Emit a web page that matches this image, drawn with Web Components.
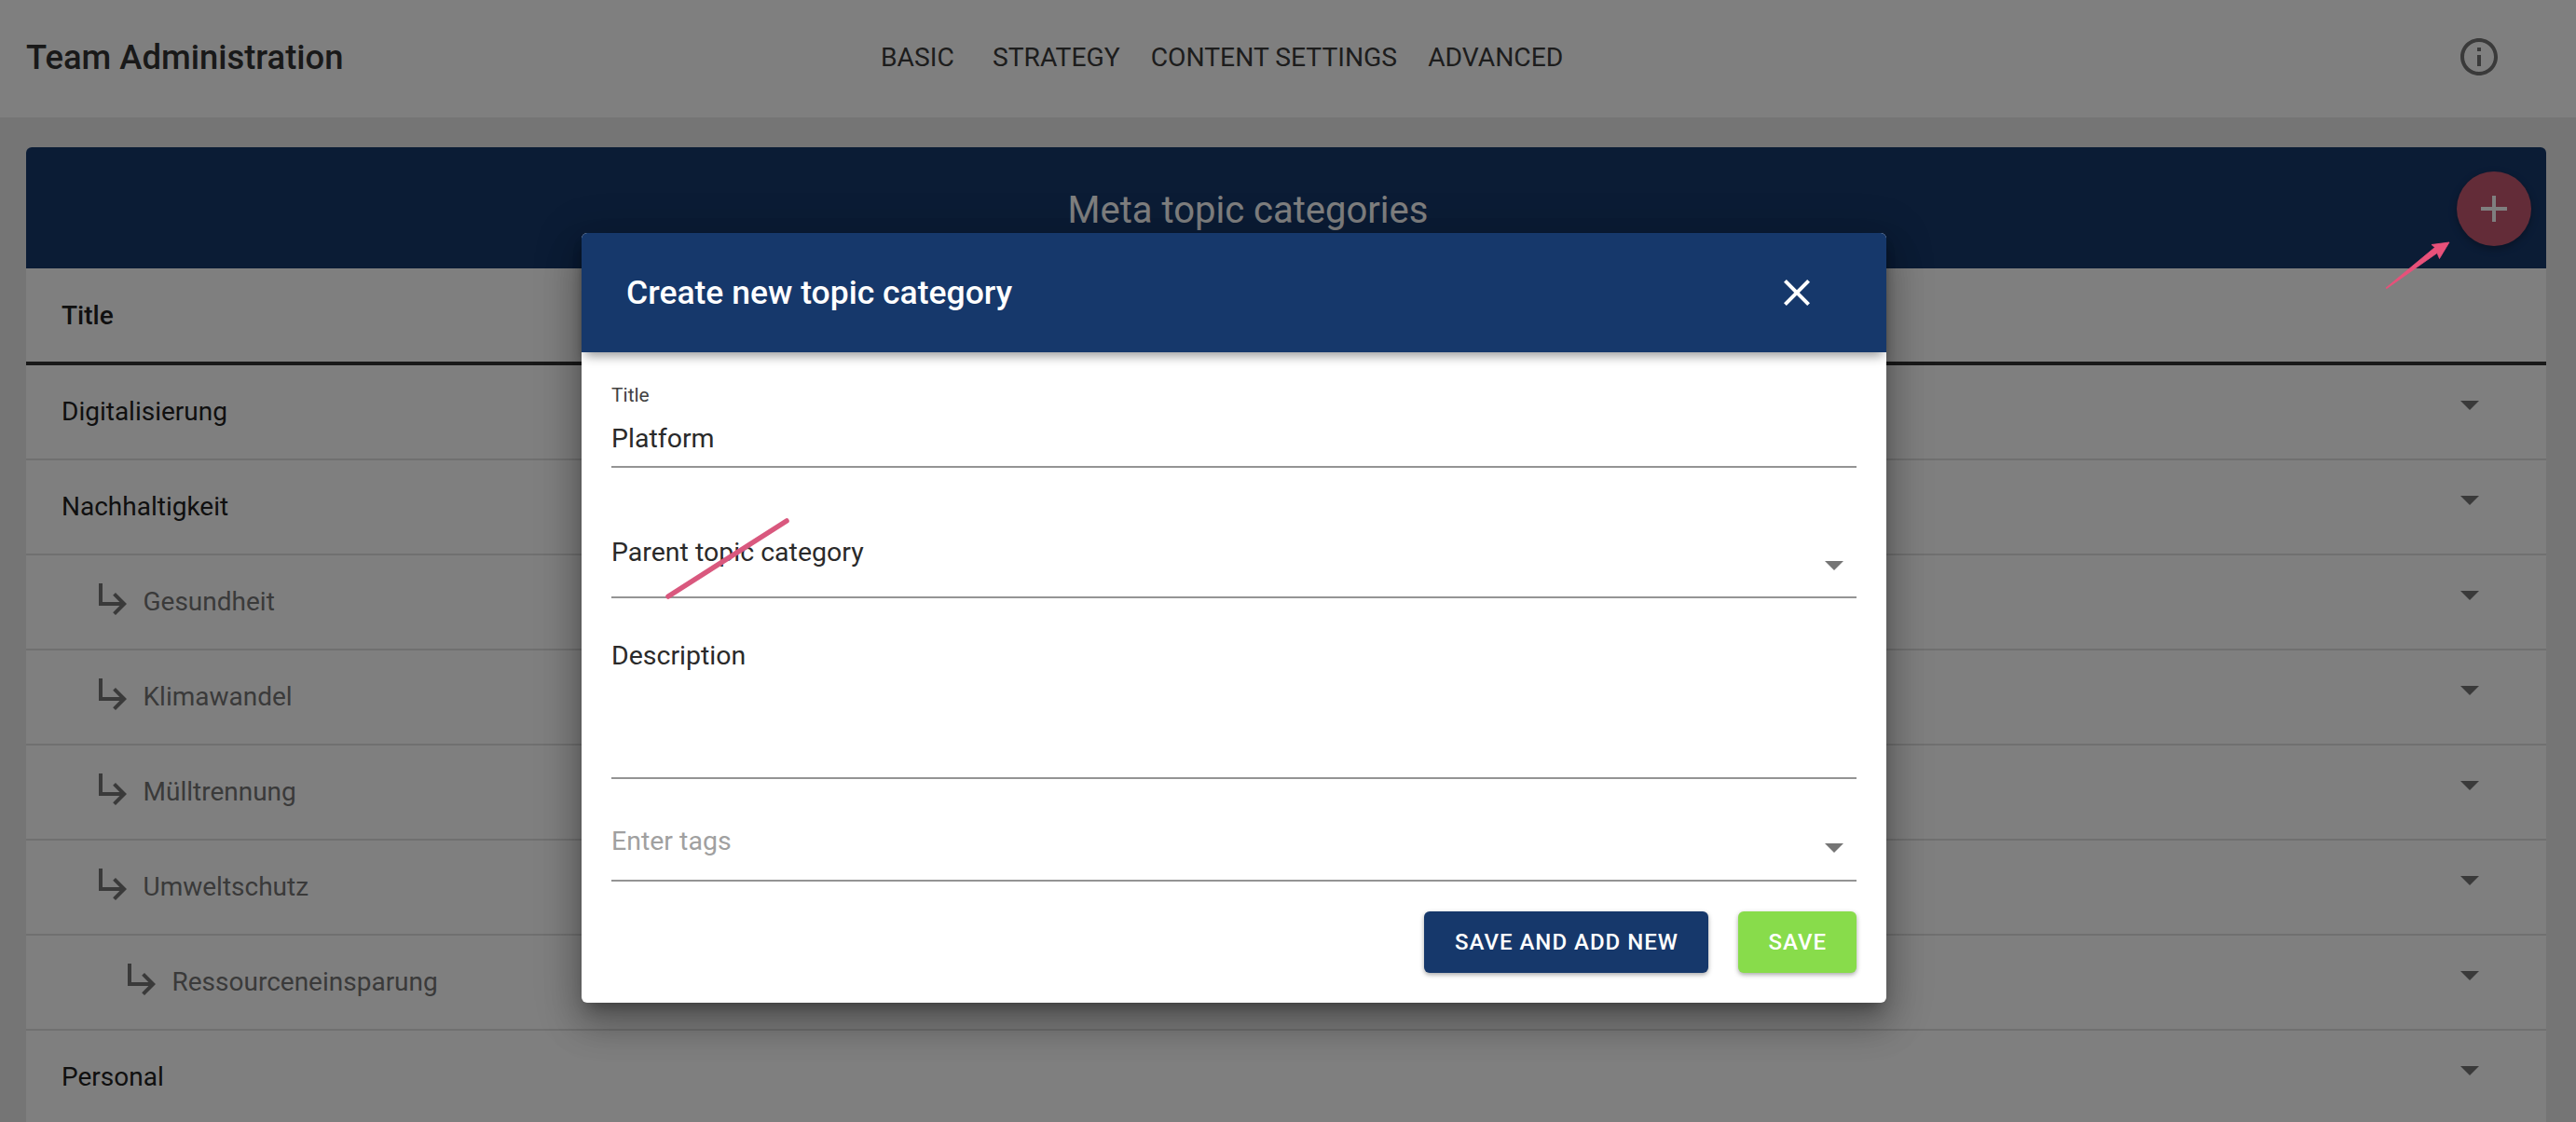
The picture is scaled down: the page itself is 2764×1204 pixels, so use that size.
<!DOCTYPE html>
<html>
<head>
<meta charset="utf-8">
<title>Team Administration</title>
<style>
  html, body { margin: 0; height: 100%; overflow: hidden; background: #eaeaea; font-family: Roboto, "Liberation Sans", sans-serif; }
</style>
</head>
<body>
<admin-page></admin-page>

<script>
const ICONS = {
  info: 'M11 7h2v2h-2zm0 4h2v6h-2zm1-9C6.48 2 2 6.48 2 12s4.48 10 10 10 10-4.48 10-10S17.52 2 12 2zm0 18c-4.41 0-8-3.59-8-8s3.59-8 8-8 8 3.59 8 8-3.59 8-8 8z',
  caret: 'M7 10l5 5 5-5z',
  close: 'M19 6.41L17.59 5 12 10.59 6.41 5 5 6.41 10.59 12 5 17.59 6.41 19 12 13.41 17.59 19 19 17.59 13.41 12z',
  plus: 'M19 13h-6v6h-2v-6H5v-2h6V5h2v6h6v2z',
  sub: 'M19 15l-6 6-1.42-1.42L15.17 16H4V4h2v10h9.17l-3.59-3.58L13 9l6 6z',
};

class BaseElement extends HTMLElement {
  constructor() {
    super();
    this.attachShadow({ mode: 'open' });
  }
  connectedCallback() {
    this.render();
  }
  icon(name, color) {
    return `<svg width="48" height="48" viewBox="0 0 24 24" fill="${color}" style="display:block;flex:none"><path d="${ICONS[name]}"/></svg>`;
  }
}

class AppBar extends BaseElement {
  render() {
    this.shadowRoot.innerHTML = `
      <style>
        :host { display:flex; align-items:center; height:126px; background:#fff; padding:0 80px 4px 28px; box-sizing:border-box; color:#212121; }
        h1 { margin:0; width:917px; font-size:36.4px; font-weight:500; white-space:nowrap; color:#333; }
        nav { display:flex; gap:33px; flex:1; font-size:28.25px; color:#3a3a3a; }
        nav a:first-child { margin-right:8px; }
      </style>
      <h1>Team Administration</h1>
      <nav><a>BASIC</a><a>STRATEGY</a><a>CONTENT SETTINGS</a><a>ADVANCED</a></nav>
      ${this.icon('info', '#757575')}
    `;
  }
}

class TopicRow extends BaseElement {
  render() {
    const level = Number(this.getAttribute('level') || 0);
    const pad = level ? 98 + (level - 1) * 31 - 28 : 38;
    this.shadowRoot.innerHTML = `
      <style>
        :host { display:flex; align-items:center; height:102px; box-sizing:border-box; border-bottom:2px solid #e0e0e0; padding:0 58px 0 ${pad}px; font-size:28px; color:#212121; }
        :host([level]) { color:#757575; }
        .label { flex:1; display:flex; align-items:center; gap:7.5px; }
        .label svg { margin-top:-9px; }
        .label span { padding-bottom:1px; }
        .caret { margin-top:-16px; }
      </style>
      <div class="label">
        ${level ? this.icon('sub', '#757575') : ''}
        <span><slot></slot></span>
      </div>
      <div class="caret">${this.icon('caret', '#757575')}</div>
    `;
  }
}

class TopicCard extends BaseElement {
  render() {
    this.shadowRoot.innerHTML = `
      <style>
        :host { display:block; background:#fff; border-radius:6px 6px 0 0; margin:32px 32px 0 28px; }
        header { position:relative; height:130px; background:#16386b; border-radius:6px 6px 0 0; display:flex; align-items:center; justify-content:center; color:#fff; font-size:40px; padding:5px 82px 0 0; box-sizing:border-box; }
        .fab { position:absolute; right:16px; top:26px; width:80px; height:80px; border-radius:50%; background:#c65870; display:flex; align-items:center; justify-content:center; box-shadow:0 3px 8px rgba(0,0,0,.3); }
        .head { display:flex; align-items:center; box-sizing:border-box; padding:0 38px 0; border-bottom:4px solid #333; height:104px; font-size:28px; font-weight:500; color:#212121; }
      </style>
      <header>Meta topic categories<div class="fab">${this.icon('plus', '#fff')}</div></header>
      <div class="head">Title</div>
      <slot></slot>
    `;
  }
}

class FormField extends BaseElement {
  render() {
    const height = this.getAttribute('height');
    const top = this.getAttribute('top') || 0;
    const small = this.getAttribute('small');
    const caret = this.getAttribute('caret');
    this.shadowRoot.innerHTML = `
      <style>
        :host { display:block; position:relative; height:${height}px; box-sizing:border-box; padding-top:${top}px; border-bottom:2px solid #949494; font-size:28.5px; color:#2a2a2a; }
        :host([placeholder]) { color:#a0a0a0; }
        small { display:block; font-size:21px; color:#424242; margin-bottom:18px; line-height:24px; }
        .caret { position:absolute; right:0; bottom:${caret}px; }
      </style>
      ${small ? `<small>${small}</small>` : ''}
      <slot></slot>
      ${caret ? `<div class="caret">${this.icon('caret', '#757575')}</div>` : ''}
    `;
  }
}

class ActionButton extends BaseElement {
  render() {
    this.shadowRoot.innerHTML = `
      <style>
        :host { display:flex; align-items:center; justify-content:center; height:66px; box-sizing:border-box; padding:0 32px; border-radius:6px; color:#fff; font-size:24px; font-weight:500; letter-spacing:1px; box-shadow:0 2px 5px rgba(0,0,0,.35); background:var(--btn, #16386b); }
      </style>
      <slot></slot>
    `;
  }
}

class ModalDialog extends BaseElement {
  render() {
    this.shadowRoot.innerHTML = `
      <style>
        :host { display:block; position:absolute; left:624px; top:250px; width:1400px; height:826px; background:#fff; border-radius:6px; box-shadow:0 11px 15px -7px rgba(0,0,0,.3), 0 24px 38px 3px rgba(0,0,0,.2), 0 9px 46px 8px rgba(0,0,0,.17); }
        header { position:relative; display:flex; align-items:center; justify-content:space-between; height:128px; box-sizing:border-box; padding:0 72px 0 48px; background:#16386b; border-radius:6px 6px 0 0; color:#fff; font-size:35.5px; font-weight:500; box-shadow:0 8px 12px -4px rgba(0,0,0,.4); }
        .body { padding:0 32px 32px; }
        .actions { display:flex; justify-content:flex-end; gap:32px; margin-top:32px; }
      </style>
      <header><span><slot name="title"></slot></span>${this.icon('close', '#fff')}</header>
      <div class="body">
        <slot></slot>
        <div class="actions"><slot name="actions"></slot></div>
      </div>
    `;
  }
}

class PinkMarks extends BaseElement {
  render() {
    this.shadowRoot.innerHTML = `
      <style>
        :host { display:block; position:absolute; left:0; top:0; width:2764px; height:1204px; pointer-events:none; }
        svg { display:block; }
      </style>
      <svg width="2764" height="1204" viewBox="0 0 2764 1204">
        <polygon points="2560,309 2612.5,265.5 2609,262.5 2628,260 2617.5,277.5 2615,271.5 2561,309.5" fill="#e8517a" stroke="#e8517a" stroke-width=".8"/>
        <line x1="717" y1="640" x2="844" y2="559" stroke="#d9587e" stroke-width="5.5" stroke-linecap="round"/>
      </svg>
    `;
  }
}

class AdminPage extends BaseElement {
  render() {
    this.shadowRoot.innerHTML = `
      <style>
        :host { display:block; position:relative; width:2764px; height:1204px; overflow:hidden; font-family:Roboto, "Liberation Sans", sans-serif; }
        .overlay { position:absolute; inset:0; background:rgba(0,0,0,.5); }
      </style>
      <app-bar></app-bar>
      <topic-card>
        <topic-row>Digitalisierung</topic-row>
        <topic-row>Nachhaltigkeit</topic-row>
        <topic-row level="1">Gesundheit</topic-row>
        <topic-row level="1">Klimawandel</topic-row>
        <topic-row level="1">Mülltrennung</topic-row>
        <topic-row level="1">Umweltschutz</topic-row>
        <topic-row level="2">Ressourceneinsparung</topic-row>
        <topic-row>Personal</topic-row>
      </topic-card>
      <div class="overlay"></div>
      <modal-dialog>
        <span slot="title">Create new topic category</span>
        <form-field height="124" top="34" small="Title">Platform</form-field>
        <form-field height="140" top="74" caret="10">Parent topic category</form-field>
        <form-field height="194" top="45">Description</form-field>
        <form-field height="110" top="50" caret="11" placeholder>Enter tags</form-field>
        <action-button slot="actions" style="padding:0 32.5px">SAVE AND ADD NEW</action-button>
        <action-button slot="actions" style="--btn:#88dc4b">SAVE</action-button>
      </modal-dialog>
      <pink-marks></pink-marks>
    `;
  }
}

customElements.define('app-bar', AppBar);
customElements.define('topic-row', TopicRow);
customElements.define('topic-card', TopicCard);
customElements.define('form-field', FormField);
customElements.define('action-button', ActionButton);
customElements.define('modal-dialog', ModalDialog);
customElements.define('pink-marks', PinkMarks);
customElements.define('admin-page', AdminPage);
</script>
</body>
</html>
